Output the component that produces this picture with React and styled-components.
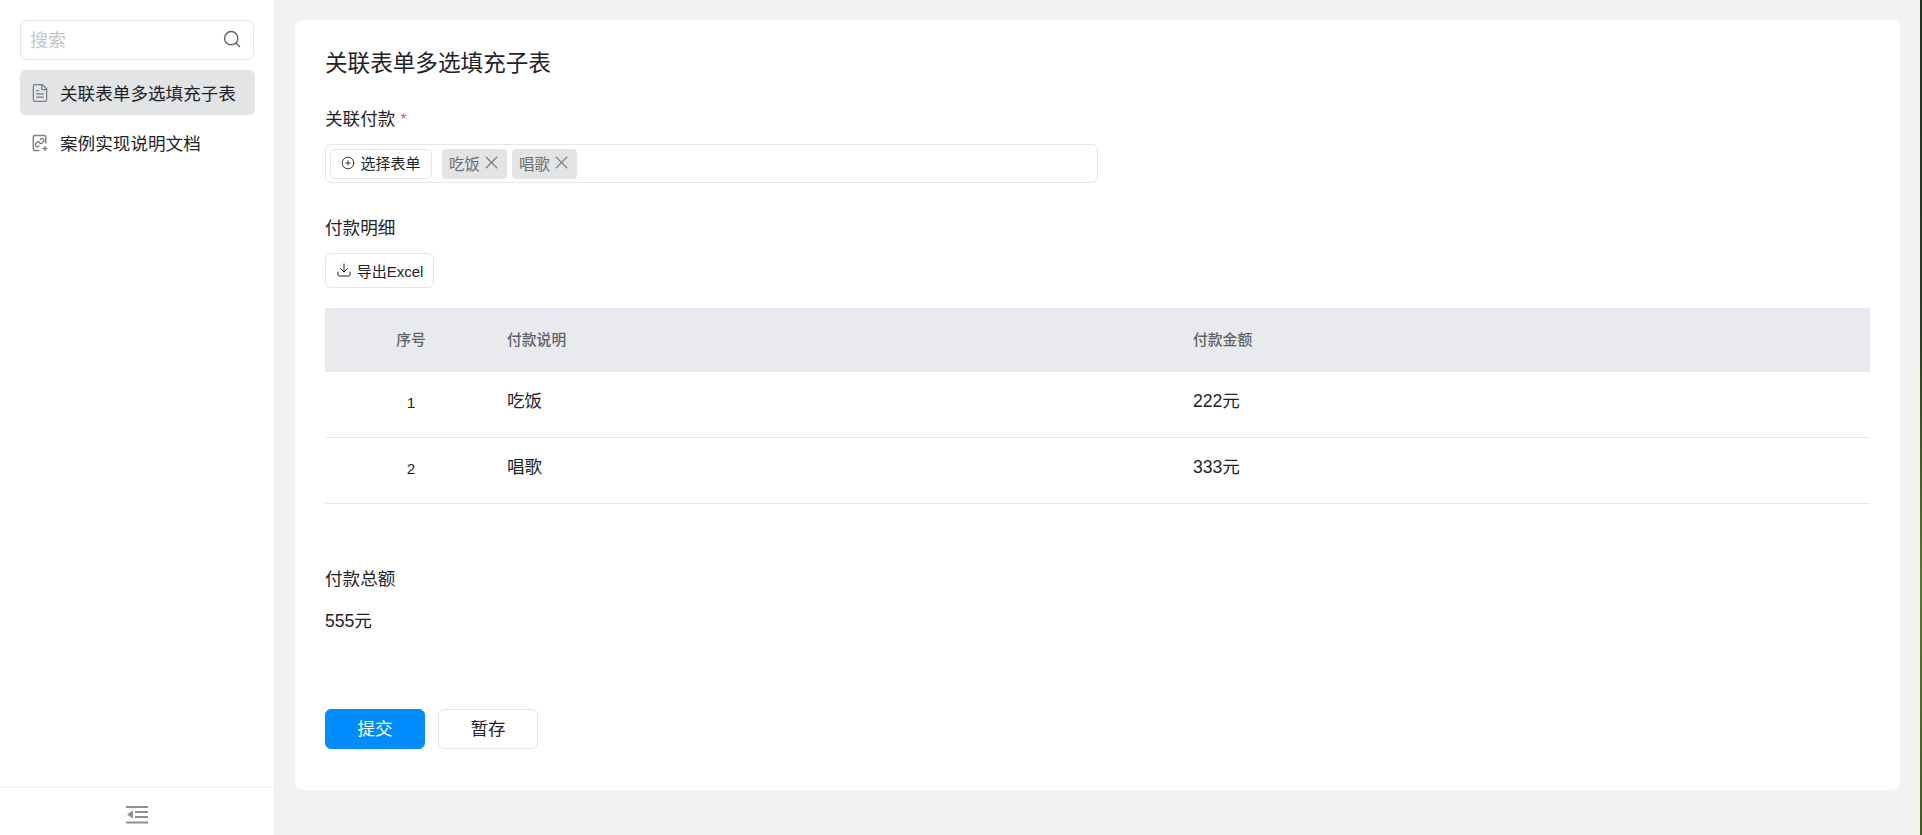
import React from "react";
import styled, { createGlobalStyle } from "styled-components";
import { Search, FileText, X, CirclePlus, Download } from "lucide-react";

const GlobalStyle = createGlobalStyle`
  html, body {
    margin: 0;
    padding: 0;
    height: 100%;
    overflow: hidden;
  }
  body {
    font-family: "Liberation Sans", "Noto Sans CJK SC", sans-serif;
    color: #1f2329;
  }
`;

const Page = styled.div`
  display: flex;
  width: 1922px;
  height: 835px;
  background: #f1f2f4;
`;

const Sidebar = styled.aside`
  width: 274px;
  flex: none;
  display: flex;
  flex-direction: column;
  background: #fff;
`;

const SideTop = styled.div`
  flex: 1;
  padding: 20px 19px 0 20px;
`;

const SearchBox = styled.div`
  display: flex;
  align-items: center;
  justify-content: space-between;
  width: 234px;
  height: 40px;
  box-sizing: border-box;
  padding: 0 11px 2px 9px;
  border: 1px solid #e5e6e8;
  border-radius: 6px;
  font-size: 18px;
  color: #c3c5c9;
  svg {
    color: #5f6368;
  }
`;

const MenuItem = styled.div`
  display: flex;
  align-items: center;
  gap: 10px;
  width: 235px;
  height: 45px;
  margin-top: ${(p) => p.$gap}px;
  padding-left: 10px;
  box-sizing: border-box;
  border-radius: 6px;
  background: ${(p) => (p.$active ? "#e3e4e6" : "transparent")};
  font-size: 17.6px;
  svg {
    flex: none;
    color: #7b7f86;
  }
`;

const SideFooter = styled.div`
  height: 48px;
  flex: none;
  box-sizing: border-box;
  padding-top: 6px;
  display: flex;
  align-items: center;
  justify-content: center;
  border-top: 1px solid #eeeff1;
`;

const Main = styled.main`
  flex: 1;
  padding: 20px 20px 45px 21px;
  min-width: 0;
`;

const Card = styled.section`
  height: 770px;
  box-sizing: border-box;
  padding: 29px 30px 0;
  background: #fff;
  border-radius: 8px;
`;

const Heading = styled.h1`
  margin: 0;
  font-size: 22.6px;
  font-weight: 400;
  line-height: 30px;
`;

const Label = styled.div`
  font-size: 17.6px;
  line-height: 24px;
  margin-top: ${(p) => p.$top}px;
`;

const Star = styled.span`
  color: #f5574c;
  margin-left: 5px;
  font-size: 16px;
`;

const PickerField = styled.div`
  display: flex;
  align-items: center;
  gap: 5px;
  width: 773px;
  height: 39px;
  box-sizing: border-box;
  margin-top: 12px;
  padding-left: 4px;
  border: 1px solid #e5e6e8;
  border-radius: 6px;
`;

const SmallButton = styled.button`
  display: inline-flex;
  align-items: center;
  justify-content: center;
  gap: 5px;
  box-sizing: border-box;
  width: ${(p) => p.$w}px;
  height: ${(p) => p.$h}px;
  padding: 0 0 ${(p) => p.$pb || 0}px;
  margin-right: ${(p) => p.$mr || 0}px;
  background: #fff;
  border: 1px solid #e5e6e8;
  border-radius: 6px;
  font-family: inherit;
  font-size: 15px;
  color: #1f2329;
`;

const Tag = styled.span`
  display: inline-flex;
  align-items: center;
  gap: 1px;
  width: 65px;
  height: 30px;
  box-sizing: border-box;
  padding: 0 0 2px 7px;
  border-radius: 4px;
  background: #e3e4e6;
  font-size: 15.4px;
  color: #6a6e75;
  svg {
    flex: none;
    color: #7b7f86;
  }
`;

const ExportRow = styled.div`
  margin-top: 13px;
  height: 35px;
`;

const Table = styled.div`
  margin-top: 20px;
  display: grid;
  grid-template-columns: 172px 686px 1fr;
`;

const HeadCell = styled.div`
  height: 64px;
  display: flex;
  align-items: center;
  justify-content: ${(p) => (p.$center ? "center" : "flex-start")};
  box-sizing: border-box;
  padding-left: ${(p) => (p.$center ? 0 : 10)}px;
  padding-bottom: 2px;
  background: #e9eaee;
  border-bottom: 1px solid #e5e6e8;
  font-size: 14.8px;
  font-weight: 500;
  color: #5f6368;
`;

const Cell = styled.div`
  height: 66px;
  display: flex;
  align-items: center;
  justify-content: ${(p) => (p.$center ? "center" : "flex-start")};
  box-sizing: border-box;
  padding-left: ${(p) => (p.$center ? 0 : 10)}px;
  padding-bottom: ${(p) => (p.$center ? 4 : 10)}px;
  border-bottom: 1px solid #e5e6e8;
  font-size: ${(p) => (p.$center ? 15.4 : 17.6)}px;
`;

const Value = styled.div`
  font-size: 17.6px;
  line-height: 24px;
  margin-top: 18px;
`;

const Actions = styled.div`
  display: flex;
  gap: 13px;
  margin-top: 76px;
`;

const ActionButton = styled.button`
  width: 100px;
  height: 40px;
  box-sizing: border-box;
  padding: 0 0 3px;
  border-radius: 6px;
  border: 1px solid ${(p) => (p.$primary ? "#008cff" : "#e5e6e8")};
  background: ${(p) => (p.$primary ? "#008cff" : "#fff")};
  color: ${(p) => (p.$primary ? "#fff" : "#1f2329")};
  font-family: inherit;
  font-size: 17.6px;
`;

const Edge = styled.div`
  width: 2px;
  flex: none;
  background: linear-gradient(180deg, #1c3324 0%, #24401f 40%, #55792a 70%, #3c5c20 100%);
`;

const LinkDocIcon = () => (
  <svg width="20" height="20" viewBox="0 0 20 20" fill="none" stroke="currentColor" strokeWidth="1.4">
    <path d="M9.500 17.500H4.800a1.500 1.500 0 0 1-1.500-1.500V4A1.500 1.500 0 0 1 4.800 2.500h9.500A1.500 1.500 0 0 1 15.800 4v6.500" />
    <path d="M9.800 6.800 11 5.800a1.900 1.900 0 0 1 2.600 2.700l-1.500 1.500a1.900 1.900 0 0 1-2.700 0" />
    <path d="M9.500 12.500l-1.200 1a1.900 1.900 0 0 1-2.600-2.700l1.500-1.500a1.900 1.900 0 0 1 2.700 0" />
    <path d="M15 13v5M12.500 15.500h5" />
  </svg>
);

const CollapseIcon = () => (
  <svg width="22" height="18" viewBox="0 0 22 18" fill="#8a8e95">
    <rect x="0" y="0" width="22" height="2" />
    <rect x="9" y="5" width="13" height="2" />
    <rect x="9" y="10" width="13" height="2" />
    <rect x="0" y="15.500" width="22" height="2" />
    <path d="M1 8.500 7 4.500v8z" />
  </svg>
);

const rows = [
  { no: 1, name: "吃饭", amount: "222元" },
  { no: 2, name: "唱歌", amount: "333元" },
];

export default function App() {
  return (
    <Page>
      <GlobalStyle />
      <Sidebar>
        <SideTop>
          <SearchBox>
            搜索
            <Search size={20} strokeWidth={1.7} />
          </SearchBox>
          <MenuItem $active $gap={10}>
            <FileText size={20} strokeWidth={1.5} />
            关联表单多选填充子表
          </MenuItem>
          <MenuItem $gap={5}>
            <LinkDocIcon />
            案例实现说明文档
          </MenuItem>
        </SideTop>
        <SideFooter>
          <CollapseIcon />
        </SideFooter>
      </Sidebar>
      <Main>
        <Card>
          <Heading>关联表单多选填充子表</Heading>
          <Label $top={28}>
            关联付款<Star>*</Star>
          </Label>
          <PickerField>
            <SmallButton $w={102} $h={30} $mr={5} $pb={2}>
              <CirclePlus size={14} strokeWidth={1.5} />
              选择表单
            </SmallButton>
            <Tag>
              吃饭
              <X size={21} strokeWidth={1.4} />
            </Tag>
            <Tag>
              唱歌
              <X size={21} strokeWidth={1.4} />
            </Tag>
          </PickerField>
          <Label $top={33}>付款明细</Label>
          <ExportRow>
            <SmallButton $w={109} $h={35} $pb={1}>
              <Download size={16} strokeWidth={1.5} />
              导出Excel
            </SmallButton>
          </ExportRow>
          <Table>
            <HeadCell $center>序号</HeadCell>
            <HeadCell>付款说明</HeadCell>
            <HeadCell>付款金额</HeadCell>
            {rows.map((row) => (
              <React.Fragment key={row.no}>
                <Cell $center>{row.no}</Cell>
                <Cell>{row.name}</Cell>
                <Cell>{row.amount}</Cell>
              </React.Fragment>
            ))}
          </Table>
          <Label $top={63}>付款总额</Label>
          <Value>555元</Value>
          <Actions>
            <ActionButton $primary>提交</ActionButton>
            <ActionButton>暂存</ActionButton>
          </Actions>
        </Card>
      </Main>
      <Edge />
    </Page>
  );
}
